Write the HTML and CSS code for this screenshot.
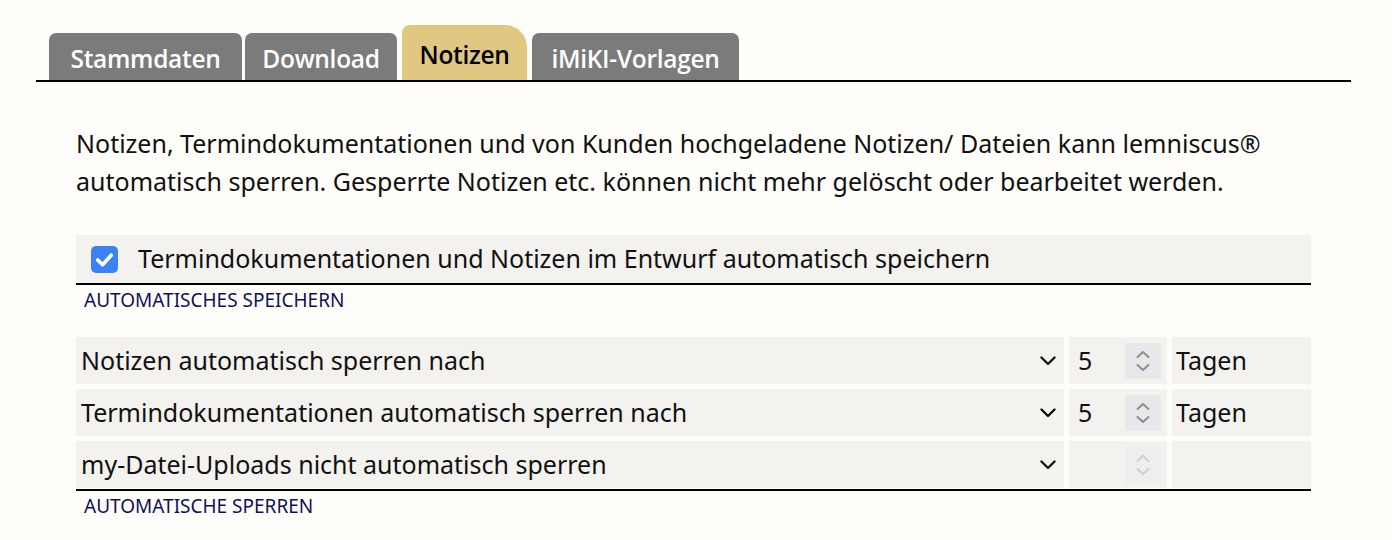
FILE: index.html
```html
<!DOCTYPE html>
<html lang="de">
<head>
<meta charset="utf-8">
<title>Notizen</title>
<link rel="stylesheet" href="styles.css">
</head>
<body>
<div class="page">
  <nav class="tabs">
    <div class="tab tab-stamm">Stammdaten</div>
    <div class="tab tab-down">Download</div>
    <div class="tab tab-active">Notizen</div>
    <div class="tab tab-imiki">iMiKI-Vorlagen</div>
  </nav>
  <div class="content">
    <p class="intro">Notizen, Termindokumentationen und von Kunden hochgeladene Notizen/ Dateien kann lemniscus®<br>automatisch sperren. Gesperrte Notizen etc. können nicht mehr gelöscht oder bearbeitet werden.</p>

    <section class="group">
      <div class="rows">
        <label class="row check-row">
          <span class="checkbox"><svg viewBox="0 0 28 28" width="28" height="28"><path d="M7 14.5 L12 19.5 L21 9.5" fill="none" stroke="#fff" stroke-width="3.8" stroke-linecap="round" stroke-linejoin="round"/></svg></span>
          <span class="check-text">Termindokumentationen und Notizen im Entwurf automatisch speichern</span>
        </label>
      </div>
      <div class="caption">AUTOMATISCHES SPEICHERN</div>
    </section>

    <section class="group group-lock">
      <div class="rows grid">
        <div class="cell select"><span>Notizen automatisch sperren nach</span><svg class="chev" viewBox="0 0 16 10" width="16" height="10"><path d="M1.5 1.5 L8 8 L14.5 1.5" fill="none" stroke="#111" stroke-width="2.4" stroke-linecap="round" stroke-linejoin="round"/></svg></div>
        <div class="cell number"><span class="num">5</span><span class="spin"><svg viewBox="0 0 36 36" width="36" height="36"><path d="M12.5 14 L18 9 L23.5 14" fill="none" stroke="#8e8e92" stroke-width="2" stroke-linecap="round" stroke-linejoin="round"/><path d="M12.5 22 L18 27 L23.5 22" fill="none" stroke="#8e8e92" stroke-width="2" stroke-linecap="round" stroke-linejoin="round"/></svg></span></div>
        <div class="cell unit">Tagen</div>

        <div class="cell select"><span>Termindokumentationen automatisch sperren nach</span><svg class="chev" viewBox="0 0 16 10" width="16" height="10"><path d="M1.5 1.5 L8 8 L14.5 1.5" fill="none" stroke="#111" stroke-width="2.4" stroke-linecap="round" stroke-linejoin="round"/></svg></div>
        <div class="cell number"><span class="num">5</span><span class="spin"><svg viewBox="0 0 36 36" width="36" height="36"><path d="M12.5 14 L18 9 L23.5 14" fill="none" stroke="#8e8e92" stroke-width="2" stroke-linecap="round" stroke-linejoin="round"/><path d="M12.5 22 L18 27 L23.5 22" fill="none" stroke="#8e8e92" stroke-width="2" stroke-linecap="round" stroke-linejoin="round"/></svg></span></div>
        <div class="cell unit">Tagen</div>

        <div class="cell select"><span>my-Datei-Uploads nicht automatisch sperren</span><svg class="chev" viewBox="0 0 16 10" width="16" height="10"><path d="M1.5 1.5 L8 8 L14.5 1.5" fill="none" stroke="#111" stroke-width="2.4" stroke-linecap="round" stroke-linejoin="round"/></svg></div>
        <div class="cell number"><span class="num"></span><span class="spin spin-disabled"><svg viewBox="0 0 36 36" width="36" height="36"><path d="M12.5 14 L18 9 L23.5 14" fill="none" stroke="#cfcfd2" stroke-width="2" stroke-linecap="round" stroke-linejoin="round"/><path d="M12.5 22 L18 27 L23.5 22" fill="none" stroke="#cfcfd2" stroke-width="2" stroke-linecap="round" stroke-linejoin="round"/></svg></span></div>
        <div class="cell unit"></div>
      </div>
      <div class="caption">AUTOMATISCHE SPERREN</div>
    </section>
  </div>
</div>
</body>
</html>
```

FILE: styles.css
```css
html, body {
  margin: 0;
  padding: 0;
  background: #fefdf9;
}
body {
  font-family: "Noto Sans", "Open Sans", sans-serif;
  color: #111;
}
.page {
  width: 1315px;
  margin-left: 36px;
  padding-top: 25px;
}
.tabs {
  display: flex;
  align-items: flex-end;
  gap: 3px;
  padding-left: 13px;
  height: 55px;
  border-bottom: 2px solid #000;
}
.tab {
  height: 47px;
  box-sizing: border-box;
  background: #7b7b7b;
  color: #fff;
  font-family: "Open Sans", "Noto Sans", sans-serif;
  font-weight: 600;
  font-size: 24.5px;
  line-height: 52px;
  letter-spacing: -0.3px;
  text-align: center;
  border-radius: 7px 7px 0 0;
  white-space: nowrap;
}
.tab-stamm { width: 193px; }
.tab-down { width: 152px; }
.tab-imiki { width: 207px; margin-left: 2px; }
.tab-active {
  width: 125px;
  height: 55px;
  margin-left: 2px;
  background: #e0c883;
  color: #000;
  line-height: 60px;
  border-radius: 8px 22px 0 0;
}
.content {
  padding: 0 40px;
}
.intro {
  margin: 42px 0 0;
  font-size: 25px;
  line-height: 38px;
  color: #111;
}
.group {
  margin-top: 35px;
}
.group-lock {
  margin-top: 23px;
}
.rows {
  border-bottom: 2px solid #000;
}
.row {
  display: flex;
  align-items: center;
  height: 48px;
  background: #f3f2ef;
}
.check-row {
  padding-left: 15px;
}
.checkbox {
  width: 27px;
  height: 27px;
  border-radius: 5px;
  background: #3b82f6;
  display: flex;
  align-items: center;
  justify-content: center;
  flex: none;
}
.checkbox svg {
  width: 27px;
  height: 27px;
}
.check-text {
  margin-left: 20px;
  font-size: 25px;
  margin-top: -2px;
}
.caption {
  padding: 2px 0 0 8px;
  font-size: 19px;
  line-height: 26px;
  color: #10105a;
  height: 27px;
}
.grid {
  display: grid;
  grid-template-columns: 1fr 98px 139px;
  grid-auto-rows: 47px;
  column-gap: 5px;
  row-gap: 5px;
  padding-bottom: 1px;
}
.cell {
  background: #f3f2ef;
  display: flex;
  align-items: center;
  font-size: 25px;
}
.select {
  padding: 0 8px 0 5px;
  justify-content: space-between;
}
.select span { margin-top: -1px; }
.number {
  padding: 0 6px 0 9px;
  justify-content: space-between;
}
.num { margin-top: -1px; }
.spin {
  width: 36px;
  height: 36px;
  background: #e8e7ea;
  display: block;
}
.spin svg { display: block; }
.spin-disabled {
  background: #efeeef;
}
.unit {
  padding-left: 4px;
  padding-bottom: 2px;
}
```
